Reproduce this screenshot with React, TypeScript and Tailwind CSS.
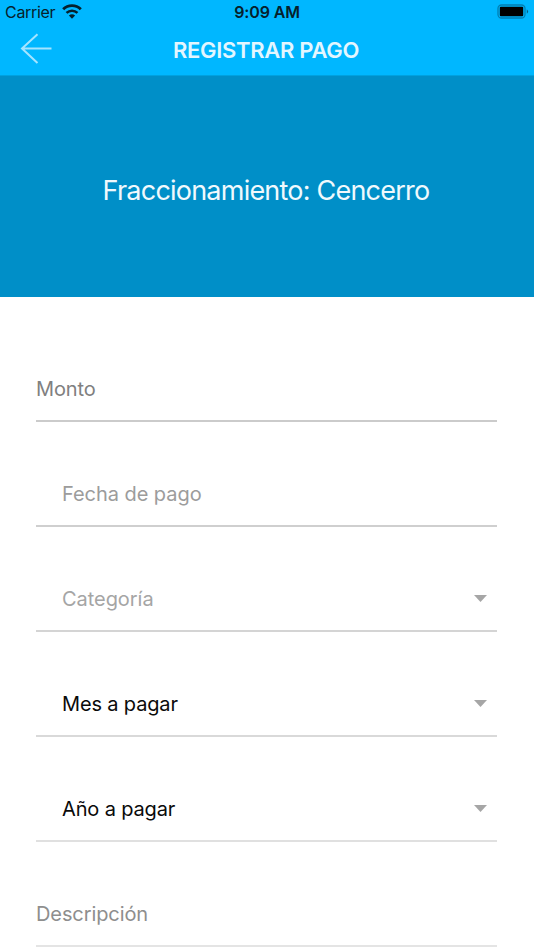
import React from "react";

const fields = [
  { id: 1, label: "Monto", text: "pl-0 text-[#808080] tracking-[-0.1px]", line: "bg-[#cbcbcb]", select: false },
  { id: 2, label: "Fecha de pago", text: "pl-[26px] text-[#9c9c9c] tracking-[-0.05px]", line: "bg-[#cfcfcf]", select: false },
  { id: 3, label: "Categoría", text: "pl-[26px] text-[#a5a5a5] tracking-[-0.05px]", line: "bg-[#d4d4d4]", select: true },
  { id: 4, label: "Mes a pagar", text: "pl-[26px] text-[#0a0a0a] tracking-[-0.15px]", line: "bg-[#d9d9d9]", select: true },
  { id: 5, label: "Año a pagar", text: "pl-[26px] text-[#0a0a0a] tracking-[-0.15px]", line: "bg-[#e0e0e0]", select: true },
  { id: 6, label: "Descripción", text: "pl-0 text-[#8e8e8e] tracking-[-0.1px]", line: "bg-[#e4e4e4]", select: false },
];

const WifiIcon = () => (
  <svg className="w-5 h-[15px] -mt-0.5" viewBox="0 0 20 15" fill="none" stroke="#06212c">
    <path d="M1.2 5.2C6 .4 14 .4 18.8 5.2" strokeWidth="2.9" />
    <path d="M4.5 8.9C7.6 6 12.4 6 15.5 8.9" strokeWidth="2.6" />
    <path d="M6.9 11.6Q10 9.1 13.1 11.6L10 14.8Z" fill="#06212c" stroke="none" />
  </svg>
);

const BatteryIcon = () => (
  <svg className="w-8 h-4" viewBox="0 0 32 16" fill="none">
    <rect x="1" y="1" width="27" height="13" rx="3.5" stroke="#007fb3" strokeWidth="1.3" />
    <rect x="2.8" y="2.8" width="23.4" height="9.4" rx="1" fill="#000" />
    <path d="M29.8 5.2Q32.4 7.5 29.8 9.8Z" fill="#035e83" />
  </svg>
);

const App = () => {
  return (
    <div className="w-full h-[950px] overflow-hidden bg-white font-['Inter','Liberation_Sans',sans-serif]">
      {/* Status bar and title */}
      <header className="h-[75px] bg-[#00b7ff]">
        <div className="grid grid-cols-3 items-center h-6 pl-[5px] pr-[5px] text-[#06212c]">
          <div className="flex items-center gap-[7px]">
            <span className="text-base leading-6 tracking-[-0.3px]">Carrier</span>
            <WifiIcon />
          </div>
          <span className="text-center text-base leading-6 font-semibold tracking-[-0.15px]">9:09 AM</span>
          <div className="flex justify-end">
            <BatteryIcon />
          </div>
        </div>
        <div className="grid grid-cols-[60px_1fr_60px] items-center h-[51px]">
          <button className="pl-[20px] pb-[3px]" aria-label="Volver">
            <svg className="w-8 h-8" viewBox="0 0 32 32" fill="none" stroke="#a5e4ff" strokeWidth="2">
              <path d="M31.5 15.5H2M17.5 1.2L2 15.5L17.5 30.1" />
            </svg>
          </button>
          <h1 className="pt-px pr-0.5 text-center text-[22px] leading-[51px] font-semibold tracking-[-0.3px] text-[#e3f6ff]">
            REGISTRAR PAGO
          </h1>
        </div>
      </header>

      {/* Neighbourhood banner */}
      <section className="flex items-center justify-center h-[222px] pt-2 pr-0.5 bg-[#008fc8] border-t border-[#00a1df]">
        <h2 className="text-[27px] leading-8 tracking-[-0.78px] text-[#f0f9fd]">
          Fraccionamiento: Cencerro
        </h2>
      </section>

      {/* Payment form */}
      <form className="pt-5 pl-9 pr-[37px]">
        {fields.map((field) => (
          <div key={field.id} className="flex flex-col justify-end h-[105px]">
            <div className="flex items-center justify-between h-[63px] pr-[10px]">
              <span className={`text-xl leading-6 ${field.text}`}>{field.label}</span>
              {field.select && (
                <svg className="w-[13px] h-[7px]" viewBox="0 0 13 7">
                  <path d="M0 0H13L6.5 7Z" fill="#a6a6a6" />
                </svg>
              )}
            </div>
            <div className={`h-0.5 shrink-0 ${field.line}`} />
          </div>
        ))}
      </form>
    </div>
  );
};

export default App;
